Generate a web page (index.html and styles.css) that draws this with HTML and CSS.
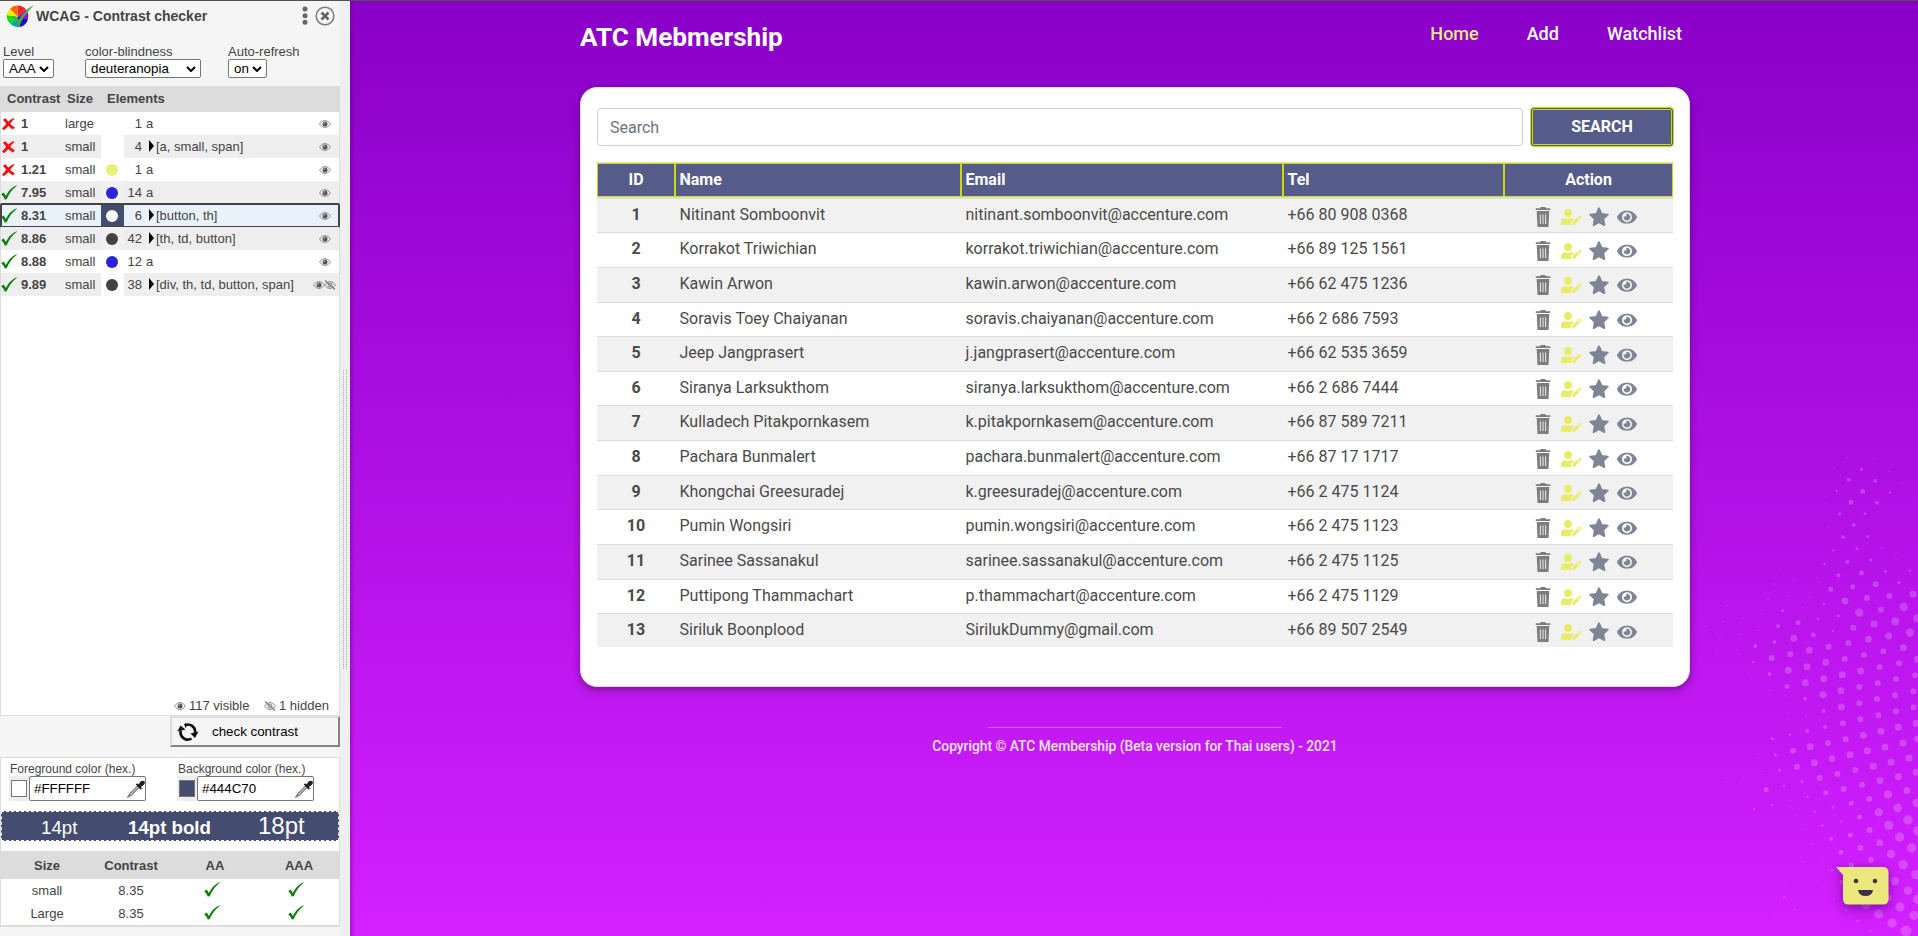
FILE: index.html
```html
<!DOCTYPE html>
<html lang="en">
<head>
<meta charset="utf-8">
<title>ATC Membership</title>
<link rel="stylesheet" href="styles.css">
</head>
<body>
<svg class="defs" width="0" height="0">
  <symbol id="seen" viewBox="0 0 12 8"><path d="M.4 4Q6-3 11.6 4Q6 11 .4 4z" fill="none" stroke="#8a8a8a" stroke-width="1"/><circle cx="6" cy="3.9" r="2.5" fill="#555"/><circle cx="5.2" cy="3" r=".7" fill="#ccc"/></symbol>
  <symbol id="unseen" viewBox="0 0 12 10"><path d="M.4 5Q6-2 11.6 5Q6 12 .4 5z" fill="none" stroke="#8a8a8a" stroke-width="1"/><circle cx="6" cy="5" r="2" fill="none" stroke="#888"/><path d="M1 .5l10 9" stroke="#777" stroke-width="1.1"/></symbol>
  <symbol id="ok" viewBox="0 0 16 15"><path d="M.3 9.2L2.6 7.4Q4 9 4.8 11Q8.500 3.500 15.600.3L15.800.7Q9 6 5.600 14.300L3.700 14.600Q2.500 11 .3 9.200z" fill="#078007"/></symbol>
  <symbol id="bad" viewBox="0 0 13 12"><path d="M1 1.800L3.600.4Q5 2.300 6.300 3.800Q8.500 1.200 11.500.2L12.200 1Q9.700 3 8 5.700Q9.700 7.700 12.800 9.600L10.800 11.200Q8 9.800 6.300 7.800Q4.700 10.400 1.700 11.900L.1 10.500Q2.800 8.300 4.300 5.800Q2.700 3.500 1 1.800z" fill="#f20d0d" stroke="#f20d0d" stroke-width=".3"/></symbol>
  <symbol id="drop" viewBox="0 0 17 17"><path d="M10.500 5.300L2.800 13 1 16l3-1.700 7.700-7.700" fill="#fff" stroke="#777" stroke-width="1.200"/><path d="M8.300 4.200l1.200-1.200 1.500 1L13 1.200Q15 0 16.300 1.200T16 4.400L13.200 6.500 14 8l-1.200 1.200z" fill="#222"/></symbol>
  <symbol id="trash" viewBox="0 0 15 20"><path d="M0 1.300h4.500L5.200 0h4.600l.7 1.300H15v1.700H0zM1.200 4h12.600L13 20H2z" fill="#7d7d7d"/><path d="M4.900 7.500v9.500M7.500 7.500v9.500M10.100 7.500v9.500" stroke="#e3e3e3" stroke-width="1.100"/></symbol>
  <symbol id="edit" viewBox="0 0 20 16"><circle cx="7" cy="4" r="4" fill="#e9ec69"/><path d="M0 16v-2.500Q0 9.300 4.200 9.300Q7 10.300 9.800 9.300Q11.800 9.300 12.900 10.400L10.400 13 10 16zM11 16l.5-2.800 4.700-4.700 2.300 2.300L13.800 15.500zM16.900 7.800l.8-.8q.6-.5 1.200 0l1 1q.6.600 0 1.200l-.8.800z" fill="#e9ec69"/></symbol>
  <symbol id="star" viewBox="0 0 20 20"><path d="M10 1.200L12.600 6.800 18.800 7.600 14.300 11.900 15.400 18.200 10 15.200 4.600 18.200 5.700 11.900 1.200 7.600 7.400 6.800z" fill="#7e8594" stroke="#7e8594" stroke-width="1.800" stroke-linejoin="round"/></symbol>
  <symbol id="eye" viewBox="0 0 576 384"><path fill="#7e8594" d="M572.500 177.400C518.300 71.600 410.900 0 288 0S57.700 71.600 3.500 177.400a32.400 32.400 0 0 0 0 29.200C57.700 312.400 165.100 384 288 384s230.300-71.600 284.500-177.400a32.400 32.400 0 0 0 0-29.200zM288 336a144 144 0 1 1 144-144 143.900 143.900 0 0 1-144 144zm0-240a95.300 95.300 0 0 0-25.300 3.800 47.900 47.900 0 0 1-66.900 66.900A95.800 95.800 0 1 0 288 96z"/></symbol>
  <symbol id="acts" viewBox="0 0 104 20"><use href="#trash" x="0.5" y="0" width="15" height="20"/><use href="#edit" x="26" y="2" width="20" height="16"/><use href="#star" x="54" y="0" width="20" height="20"/><use href="#eye" x="82" y="3.500" width="20" height="13.300"/></symbol>
</svg>
<div class="app">
<aside class="checker">
  <header class="checker-head">
    <svg class="logo" width="30" height="26" viewBox="0 0 30 26"><path d="M11.500 12.500V1.500A11 11 0 0 1 20 5.500z" fill="#f22"/><path d="M11.500 12.500L20 5.500A11 11 0 0 1 22 15z" fill="#a0c"/><path d="M11.500 12.500L22 15A11 11 0 0 1 14 23z" fill="#11c"/><path d="M11.500 12.500L14 23A11 11 0 0 1 4.500 20z" fill="#0aa"/><path d="M11.500 12.500L4.500 20A11 11 0 0 1 .8 11z" fill="#1d1"/><path d="M11.500 12.500L.8 11A11 11 0 0 1 4 4.700z" fill="#ee0"/><path d="M11.500 12.500L4 4.700A11 11 0 0 1 11.500 1.500z" fill="#f60"/><path d="M5.500 12q4 0 7 4Q18 6 28 1Q18 11 13.500 21.500h-1.500Q10 15 5.500 12z" fill="#4ba53c"/></svg>
    <h1>WCAG - Contrast checker</h1>
    <svg class="dots" width="6" height="20" viewBox="0 0 6 20"><g fill="#666"><circle cx="3" cy="3" r="2.500"/><circle cx="3" cy="9.700" r="2.500"/><circle cx="3" cy="16.300" r="2.500"/></g></svg>
    <svg class="close" width="20" height="20" viewBox="0 0 20 20"><circle cx="10" cy="10" r="8.800" fill="none" stroke="#777" stroke-width="1.500"/><path d="M6.500 6.500l7 7m0-7l-7 7" stroke="#666" stroke-width="2.800"/></svg>
  </header>
  <div class="options">
    <label class="o1">Level<span class="sel">AAA<svg width="10" height="6" viewBox="0 0 10 6"><path d="M1 1l4 4 4-4" /></svg></span></label>
    <label class="o2">color-blindness<span class="sel">deuteranopia<svg width="10" height="6" viewBox="0 0 10 6"><path d="M1 1l4 4 4-4" /></svg></span></label>
    <label class="o3">Auto-refresh<span class="sel">on<svg width="10" height="6" viewBox="0 0 10 6"><path d="M1 1l4 4 4-4" /></svg></span></label>
  </div>
  <div class="list-head"><b>Contrast</b><b>Size</b><b>Elements</b></div>
  <div class="list">
    <div class="item"><svg class="bad"><use href="#bad"/></svg><b>1</b><span>large</span><i></i><em>1</em><span class="tags">a</span><svg class="seen"><use href="#seen"/></svg></div>
    <div class="item"><svg class="bad"><use href="#bad"/></svg><b>1</b><span>small</span><i></i><em>4</em><span class="tags more">[a, small, span]</span><svg class="seen"><use href="#seen"/></svg></div>
    <div class="item"><svg class="bad"><use href="#bad"/></svg><b>1.21</b><span>small</span><i class="yellow"></i><em>1</em><span class="tags">a</span><svg class="seen"><use href="#seen"/></svg></div>
    <div class="item"><svg class="ok"><use href="#ok"/></svg><b>7.95</b><span>small</span><i class="blue tint"></i><em>14</em><span class="tags">a</span><svg class="seen"><use href="#seen"/></svg></div>
    <div class="item active"><svg class="ok"><use href="#ok"/></svg><b>8.31</b><span>small</span><i class="white"></i><em>6</em><span class="tags more">[button, th]</span><svg class="seen"><use href="#seen"/></svg></div>
    <div class="item"><svg class="ok"><use href="#ok"/></svg><b>8.86</b><span>small</span><i class="dark tint"></i><em>42</em><span class="tags more">[th, td, button]</span><svg class="seen"><use href="#seen"/></svg></div>
    <div class="item"><svg class="ok"><use href="#ok"/></svg><b>8.88</b><span>small</span><i class="blue"></i><em>12</em><span class="tags">a</span><svg class="seen"><use href="#seen"/></svg></div>
    <div class="item"><svg class="ok"><use href="#ok"/></svg><b>9.89</b><span>small</span><i class="dark"></i><em>38</em><span class="tags more">[div, th, td, button, span]</span><svg class="seen"><use href="#seen"/></svg><svg class="unseen"><use href="#unseen"/></svg></div>
    <div class="totals"><svg class="seen"><use href="#seen"/></svg><span>117 visible</span><svg class="unseen"><use href="#unseen"/></svg><span>1 hidden</span></div>
  </div>
  <div class="check"><svg width="22" height="20" viewBox="0 0 22 20"><g fill="none" stroke="#111" stroke-width="2.600"><path d="M3.800 8.500A7.200 7.200 0 0 0 14.500 16.500"/><path d="M7.500 3.400A7.200 7.200 0 0 1 18 11"/></g><path d="M.3 9.500L3.500 3.500 8.500 7.500zM21.500 9.500L18 16 13.500 11.500zM8 1v5L11 3z" fill="#111"/></svg><span>check contrast</span></div>
  <div class="picker">
    <div class="colors">
      <div class="color"><span>Foreground color (hex.)</span><div class="field"><i class="fg"></i><div class="hex">#FFFFFF<svg><use href="#drop"/></svg></div></div></div>
      <div class="color"><span>Background color (hex.)</span><div class="field"><i class="bg"></i><div class="hex">#444C70<svg><use href="#drop"/></svg></div></div></div>
    </div>
    <div class="sample"><span class="s1">14pt</span><b class="s2">14pt bold</b><span class="s3">18pt</span></div>
    <div class="result head"><b>Size</b><b>Contrast</b><b>AA</b><b>AAA</b></div>
    <div class="result"><span>small</span><span>8.35</span><svg class="ok"><use href="#ok"/></svg><svg class="ok"><use href="#ok"/></svg></div>
    <div class="result"><span>Large</span><span>8.35</span><svg class="ok"><use href="#ok"/></svg><svg class="ok"><use href="#ok"/></svg></div>
  </div>
</aside>
<div class="resizer"><span></span><span></span></div>
<main class="page">
  <svg class="halftone" width="248" height="496" viewBox="0 0 744 1488">
    <g fill="none" stroke="#fff" stroke-opacity=".2" stroke-linecap="round">
      <path stroke-width="4" d="M531 53h0M494 86h0M656 95h0M612 58h0M467 188h0M477 260h0M635 324h0M678 358h0M331 388h0M375 423h0M439 413h0M418 458h0M311 432h0M294 477h0M354 467h0M399 502h0M172 498h0M160 545h0M105 558h0M219 535h0M278 523h0M208 582h0M265 571h0M150 594h0M94 604h0M199 629h0M142 640h0M245 715h0M296 751h0M351 788h0M353 836h0M407 825h0M263 955h0M275 1003h0M221 1015h0M169 1027h0M360 1082h0M380 1127h0M404 1168h0M427 1212h0M456 1251h0M399 1266h0M458 1341h0M345 1329h0M316 1423h0M491 1376h0M700 130h0"/>
      <path stroke-width="7" d="M500 152h0M660 158h0M490 331h0M463 372h0M719 392h0M444 537h0M461 492h0M489 573h0M249 666h0M252 1107h0M306 1095h0M342 1037h0M413 1071h0M360 884h0M434 1115h0M457 1157h0M488 1102h0M513 1144h0M342 1371h0M374 1408h0M486 1289h0M527 1411h0M563 1443h0M602 1472h0"/>
      <path stroke-width="9" d="M574 88h0M509 221h0M585 221h0M593 290h0M603 360h0M561 326h0M646 394h0M687 428h0M338 512h0M505 527h0M307 896h0M316 944h0M328 991h0M396 1025h0"/>
      <path stroke-width="12" d="M536 119h0M616 123h0M621 188h0M551 255h0M519 292h0M532 365h0M505 406h0M324 559h0M313 606h0M256 618h0M299 702h0M405 776h0M461 813h0M465 861h0M412 873h0M484 1197h0"/>
      <path stroke-width="15" d="M543 187h0M578 154h0M574 399h0M548 440h0M482 448h0M384 548h0M289 1049h0M467 1058h0M544 1090h0M569 1131h0M541 1185h0M513 1237h0M544 1275h0M430 584h0M351 739h0M516 1327h0"/>
      <path stroke-width="18" d="M617 433h0M591 474h0M658 468h0M633 509h0M550 563h0M535 609h0M476 620h0M361 643h0M305 654h0M524 657h0M582 645h0M640 634h0M687 670h0M678 717h0M678 814h0M735 706h0M730 754h0M731 802h0M629 681h0M623 729h0M675 766h0M621 777h0M625 826h0M571 838h0M568 790h0M568 741h0M519 850h0M527 898h0M474 909h0M369 932h0M381 980h0M449 1014h0M502 1002h0M521 1047h0M576 1034h0M556 990h0M598 1077h0M598 1170h0M571 1223h0M603 1259h0"/>
      <path stroke-width="21" d="M525 483h0M729 462h0M612 552h0M656 588h0M595 598h0M700 623h0M371 595h0M418 631h0M355 691h0M411 680h0M467 667h0M406 728h0M461 716h0M459 764h0M517 704h0M513 752h0M514 801h0M572 693h0M742 658h0M738 850h0M685 862h0M743 897h0M699 909h0M633 874h0M580 886h0M592 932h0M645 921h0M540 944h0M486 956h0M433 968h0M421 920h0M610 979h0M663 966h0M717 954h0M738 997h0M685 1010h0M630 1022h0M711 1051h0M629 1208h0M655 1374h0"/>
      <path stroke-width="25" d="M568 518h0M676 544h0M701 501h0M720 578h0M742 535h0M654 1064h0M740 1089h0M683 1104h0M626 1117h0M663 1242h0M675 1323h0M714 1352h0"/>
      <path stroke-width="28" d="M656 1156h0M714 1140h0M689 1191h0M725 1224h0M743 1173h0M700 1274h0M737 1304h0M589 1393h0M626 1422h0M690 1401h0M732 1426h0M666 1449h0M743 1378h0"/>
      <path stroke-width="33" d="M708 1473h0"/>
    </g>
  </svg>
  <div class="container">
    <nav class="nav"><span class="brand">ATC Mebmership</span><div class="links"><a class="current">Home</a><a>Add</a><a>Watchlist</a></div></nav>
    <section class="card">
      <div class="search"><div class="input">Search</div><div class="button">SEARCH</div></div>
      <div class="table">
        <div class="thead"><b>ID</b><b>Name</b><b>Email</b><b>Tel</b><b>Action</b></div>
        <div class="row"><b>1</b><span>Nitinant Somboonvit</span><span>nitinant.somboonvit@accenture.com</span><span>+66 80 908 0368</span><svg><use href="#acts"/></svg></div>
        <div class="row"><b>2</b><span>Korrakot Triwichian</span><span>korrakot.triwichian@accenture.com</span><span>+66 89 125 1561</span><svg><use href="#acts"/></svg></div>
        <div class="row"><b>3</b><span>Kawin Arwon</span><span>kawin.arwon@accenture.com</span><span>+66 62 475 1236</span><svg><use href="#acts"/></svg></div>
        <div class="row"><b>4</b><span>Soravis Toey Chaiyanan</span><span>soravis.chaiyanan@accenture.com</span><span>+66 2 686 7593</span><svg><use href="#acts"/></svg></div>
        <div class="row"><b>5</b><span>Jeep Jangprasert</span><span>j.jangprasert@accenture.com</span><span>+66 62 535 3659</span><svg><use href="#acts"/></svg></div>
        <div class="row"><b>6</b><span>Siranya Larksukthom</span><span>siranya.larksukthom@accenture.com</span><span>+66 2 686 7444</span><svg><use href="#acts"/></svg></div>
        <div class="row"><b>7</b><span>Kulladech Pitakpornkasem</span><span>k.pitakpornkasem@accenture.com</span><span>+66 87 589 7211</span><svg><use href="#acts"/></svg></div>
        <div class="row"><b>8</b><span>Pachara Bunmalert</span><span>pachara.bunmalert@accenture.com</span><span>+66 87 17 1717</span><svg><use href="#acts"/></svg></div>
        <div class="row"><b>9</b><span>Khongchai Greesuradej</span><span>k.greesuradej@accenture.com</span><span>+66 2 475 1124</span><svg><use href="#acts"/></svg></div>
        <div class="row"><b>10</b><span>Pumin Wongsiri</span><span>pumin.wongsiri@accenture.com</span><span>+66 2 475 1123</span><svg><use href="#acts"/></svg></div>
        <div class="row"><b>11</b><span>Sarinee Sassanakul</span><span>sarinee.sassanakul@accenture.com</span><span>+66 2 475 1125</span><svg><use href="#acts"/></svg></div>
        <div class="row"><b>12</b><span>Puttipong Thammachart</span><span>p.thammachart@accenture.com</span><span>+66 2 475 1129</span><svg><use href="#acts"/></svg></div>
        <div class="row"><b>13</b><span>Siriluk Boonplood</span><span>SirilukDummy@gmail.com</span><span>+66 89 507 2549</span><svg><use href="#acts"/></svg></div>
      </div>
    </section>
    <footer class="footer"><small>Copyright © ATC Membership (Beta version for Thai users) - 2021</small></footer>
  </div>
  <svg class="chat" width="54" height="40" viewBox="0 0 54 40"><path d="M0 0H47Q52.500 0 52.500 5.500V32Q52.500 37.500 47 37.500H12.500Q7 37.500 7 32V8z" fill="#ebe77c"/><circle cx="20" cy="14" r="2.300" fill="#3a3342"/><circle cx="39" cy="14" r="2.300" fill="#3a3342"/><path d="M22 23h15q-1 6-7.500 6T22 23z" fill="#3a3342"/></svg>
</main>
</div>
</body>
</html>
```
FILE: styles.css
```css
* { box-sizing: border-box; }
body { margin: 0; height: 936px; overflow: hidden; font-family: "Liberation Sans", Arial, sans-serif; color: #444; }
.defs { position: absolute; }
.app { display: flex; height: 936px; border-top: 1px solid #54504f; }
svg { display: block; flex: none; }
i, em { font-style: normal; }

.checker { width: 340px; background: #f5f5f5; font-size: 13.3px; }
.checker-head { display: flex; align-items: flex-start; height: 44px; padding-left: 6px; }
.checker-head .logo { margin-top: 3px; }
.checker-head h1 { margin: 7px 0 0; width: 266px; font-size: 14px; line-height: 16px; }
.checker-head .dots { margin-top: 5px; width: 6px; }
.checker-head .close { margin: 5px 0 0 7px; }
.options { display: flex; height: 41px; padding-left: 3px; }
.options label { font-size: 13px; line-height: 14px; }
.o1 { width: 82px; }
.o2 { width: 143px; }
.sel { display: flex; align-items: center; justify-content: space-between; width: 51px; height: 19px; padding: 0 4px 0 5px; background: #fff; border: 1px solid #767676; border-radius: 2px; color: #000; font-size: 13.33px; }
.o2 .sel { width: 116px; }
.o3 .sel { width: 39px; }
.sel path { fill: none; stroke: #000; stroke-width: 2; }
.list-head { display: flex; height: 26px; background: #dcdcdc; padding-left: 7px; font-size: 13px; line-height: 25px; }
.list-head b:nth-child(1) { width: 60px; }
.list-head b:nth-child(2) { width: 40px; }
.list { display: flex; flex-direction: column; height: 604px; background: #fff; border: 1px solid #ddd; border-top: 0; }
.item { display: grid; grid-template-columns: 20px 44px 36px 23px 20px 172px 1fr; align-items: center; height: 23px; flex: none; font-size: 13px; position: relative; }
.item:nth-child(even) { background: #eee; }
.item b, .item em, .item > span { line-height: 23px; height: 23px; }
.item i { height: 23px; background: #fff; display: grid; place-items: center; }
.item i.tint { background: #f1f1f1; }
.item i::after { content: ""; width: 12px; height: 12px; border-radius: 50%; margin: 1px 1px 0 0; }
.item i.yellow::after { background: #ecee78; }
.item i.blue::after { background: #2b22dc; }
.item i.dark::after { background: #424242; }
.item i.white { background: #444c70; }
.item i.white::after { background: #fff; }
.item em { text-align: right; padding-right: 2px; }
.item .tags { padding-left: 2px; white-space: nowrap; }
.more { display: flex; align-items: center; }
.item .more::before { content: ""; border: 6px solid transparent; border-left: 5px solid #000; border-right: 0; margin: 0 2px 1px 3px; }
.item.active { background: #e9f2fb; outline: 2px solid #444; outline-offset: -1px; border-radius: 1px; }
.bad { width: 13px; height: 12px; margin-left: 1px; }
.ok { width: 16px; height: 15px; }
.item .seen { width: 12px; height: 8px; margin-left: 3px; }
.item:nth-child(8) .seen { margin-left: -3px; }
.item .unseen { position: absolute; right: 3px; top: 7px; width: 12px; height: 10px; }
.totals { display: flex; align-items: center; margin-top: auto; height: 19px; padding-left: 173px; font-size: 13px; }
.totals svg { width: 12px; height: 10px; margin-right: 3px; }
.totals span:nth-child(2) { width: 75px; }
.check { display: flex; align-items: center; width: 170px; height: 31px; margin: 0 0 10px auto; padding-left: 5px; background: #f5f5f5; border: 2px solid; border-color: #ddd #858585 #858585 #ddd; color: #000; font-size: 13.33px; }
.check span { margin-left: 13px; }
.picker { height: 170px; background: #fff; border: 1px solid #ddd; border-bottom-width: 2px; }
.colors { display: flex; height: 53px; padding: 4px 0 0 8px; }
.color { flex: none; width: 168px; font-size: 12px; line-height: 15px; }
.color > span { display: block; height: 14px; padding-left: 1px; }
.field { display: flex; width: 137px; background: #eee; height: 25px; }
.field i { width: 16px; height: 17px; margin: 4px 2px 0; border: 1px solid #767676; background: #fff; }
.field i.bg { background: #444c70; }
.hex { display: flex; justify-content: space-between; align-items: center; width: 117px; height: 25px; padding: 0 0 0 4px; background: #fff; border: 1px solid #767676; border-radius: 2px; color: #000; font-size: 13.33px; }
.hex svg { width: 18px; height: 18px; }
.sample { height: 30px; background: #444c70; border: 1px dashed #fff; color: #fff; display: flex; align-items: baseline; font-size: 18.67px; line-height: 28px; }
.s1 { padding-left: 39px; width: 126px; }
.s2 { width: 130px; }
.s3 { font-size: 24px; }
.result { display: grid; grid-template-columns: 92px 76px 90px 78px; height: 23px; place-items: center; font-size: 13px; }
.result.head { height: 28px; background: #dcdcdc; margin-top: 10px; }
.result.head b:nth-child(n+3) { margin-left: 2px; }
.result .ok { margin: -2px 4px 0 0; }

.resizer { width: 10px; background: #efefef; display: flex; gap: 2px; padding: 369px 0 0 3px; }
.resizer span { width: 1px; height: 300px; background: repeating-linear-gradient(#aaa 0 1px, #eee 1px 2px); }

.page { position: relative; flex: 1; padding-left: 230px; background: linear-gradient(90deg, rgba(60,0,90,.3), transparent 5px), linear-gradient(#8a00c8, #d320ff); font-family: Roboto, sans-serif; }
.halftone { position: absolute; right: 0; bottom: 0; }
.container { width: 1110px; position: relative; }
.nav { display: flex; justify-content: space-between; height: 86px; color: #fff; }
.brand { font-size: 26.1px; font-weight: 700; line-height: 31px; margin-top: 21px; }
.links { display: flex; gap: 48px; padding: 22px 8px 0 0; font-size: 18px; font-weight: 500; line-height: 22px; }
.current { color: #ecea80; }
.card { height: 600px; padding: 19px 16px 0; background: #fff; border: 1px solid #ddd; border-radius: 17px; box-shadow: 0 3px 9px rgba(0,0,0,.35); }
.search { display: flex; justify-content: space-between; height: 40px; align-items: center; margin-right: -1px; }
.input { width: 926px; height: 38px; padding-left: 12px; border: 1px solid #ccced4; border-radius: 4px; color: #6c757d; font-size: 16px; line-height: 37px; }
.button { width: 144px; height: 40px; background: #555c8a; border: 3px double #cddc00; border-radius: 4px; color: #fff; text-align: center; font-weight: 700; font-size: 16px; line-height: 33px; }
.table { margin-top: 15px; border-top: 1px solid #dcdcde; font-size: 16px; }
.thead, .row { display: grid; grid-template-columns: 78px 286px 322px 221px 169px; }
.thead { height: 34px; background: #555c8a; color: #fff; }
.thead b { border: 1px solid #cddc00; padding-left: 3.5px; line-height: 31px; }
.thead b:first-child, .thead b:last-child, .row b { text-align: center; padding: 0; }
.row { height: 34.640px; border-top: 1px solid #dcdde1; line-height: 32px; color: #4a4a4a; }
.row:nth-child(2) { height: 35.300px; border-top-width: 2px; }
.row:last-child { height: 34px; }
.row:nth-child(even) { background: #f1f1f1; }
.row span { padding-left: 4.500px; }
.row svg { width: 104px; height: 20px; margin: 7.500px 0 0 31px; }
.footer { text-align: center; margin-top: 40px; height: 40px; color: #f8e4ff; }
.footer::before { content: ""; display: block; width: 294px; height: 1px; margin: 0 auto; background: rgba(255,255,255,.28); }
.footer small { display: block; font-size: 13.8px; font-weight: 500; line-height: 16px; margin-top: 10px; }
.chat { position: absolute; left: 1486px; top: 866px; filter: drop-shadow(0 4px 6px rgba(60,0,90,.55)); }
```
